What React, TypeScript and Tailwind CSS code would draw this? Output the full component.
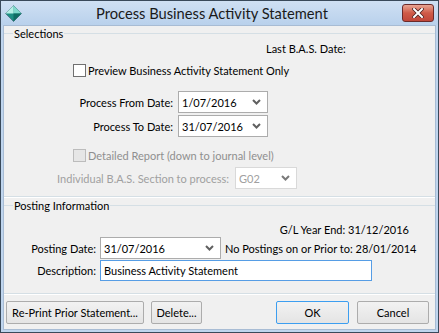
import React from 'react';

// ============================================
// Small pieces
// ============================================

const font = "font-['Lato','Segoe_UI',sans-serif]";

function Chevron({ disabled = false }: { disabled?: boolean }) {
  return (
    <svg width="9" height="6" viewBox="0 0 9 6" className="shrink-0">
      <path
        d="M1 1 L4.5 4.5 L8 1"
        fill="none"
        stroke={disabled ? '#7a7a7a' : '#606060'}
        strokeWidth="2"
      />
    </svg>
  );
}

function DateSelect({
  value,
  width,
  disabled = false,
}: {
  value: string;
  width: string;
  disabled?: boolean;
}) {
  return (
    <div
      className={`${width} h-[22px] flex items-center justify-between pl-[3px] pr-[6px] bg-white border ${
        disabled ? 'border-[#d9d9d9]' : 'border-[#acacac]'
      }`}
    >
      <span>{value}</span>
      <Chevron disabled={disabled} />
    </div>
  );
}

function CheckBox({ disabled = false }: { disabled?: boolean }) {
  return (
    <div
      className={`w-[13px] h-[13px] shrink-0 border ${
        disabled ? 'border-[#bcbcbc] bg-[#e6e6e6]' : 'border-[#707070] bg-white'
      }`}
    />
  );
}

function GroupHeader({ label }: { label: string }) {
  return (
    <div className="flex items-center h-[13px]">
      <div className="w-[9px] border-t border-[#d5dfe5]" />
      <span className="px-[1px]">{label}</span>
      <div className="flex-1 border-t border-[#d5dfe5]" />
    </div>
  );
}

function Button({
  children,
  width,
  primary = false,
}: {
  children: React.ReactNode;
  width: string;
  primary?: boolean;
}) {
  return (
    <button
      type="button"
      className={`${width} h-[23px] flex items-center justify-center whitespace-nowrap border rounded-[2px] bg-gradient-to-b from-[#f2f2f2] to-[#e4e4e4] ${
        primary ? 'border-[#3c9ef0]' : 'border-[#acacac]'
      }`}
    >
      {children}
    </button>
  );
}

// ============================================
// Dialog
// ============================================

export default function App() {
  return (
    <div
      className={`${font} w-[439px] h-[333px] bg-[#bfd5ee] border border-[#39495a] flex flex-col text-[11px] leading-[15px] text-black overflow-hidden`}
    >
      {/* Title bar */}
      <div className="h-[24px] flex items-center shrink-0 bg-gradient-to-b from-[#cfe0f3] to-[#b9d1ec]">
        <svg width="17" height="17" viewBox="0 0 17 17" className="ml-[4px]">
          <polygon points="8.5,0.5 16.5,8.5 8.5,16.5 0.5,8.5" fill="#1d8f83" stroke="#4b6f80" strokeWidth="0.8" />
          <polygon points="8.5,0.5 16.5,8.5 8.5,8.5" fill="#7fd9cc" />
          <polygon points="8.5,0.5 0.5,8.5 8.5,8.5" fill="#b6efe6" />
          <polygon points="8.5,16.5 16.5,8.5 8.5,8.5" fill="#0f6c63" />
        </svg>
        <div className="flex-1 text-center text-[14.7px] leading-[20px] text-[#1a1a1a]">
          Process Business Activity Statement
        </div>
        <div className="mr-[4px] w-[32px] h-[18px] rounded-[3px] border border-[#6b2a2a] bg-gradient-to-b from-[#e8a493] via-[#cf5a48] to-[#c0463a] flex items-center justify-center">
          <svg width="12" height="10" viewBox="0 0 12 10">
            <path d="M2 1 L10 9 M10 1 L2 9" stroke="#4a2020" strokeWidth="3.6" strokeLinecap="square" />
            <path d="M2 1 L10 9 M10 1 L2 9" stroke="#ffffff" strokeWidth="2" strokeLinecap="square" />
          </svg>
        </div>
      </div>

      {/* Client area */}
      <div className="flex-1 mx-[2px] mb-[2px] bg-[#f0f0f0] flex flex-col border border-[#a8bcd4]">
        <div className="mt-[1px]">
          <GroupHeader label="Selections" />
        </div>

        <div className="mt-[1px] h-[15px] flex items-center pl-[262px]">Last B.A.S. Date:</div>

        <div className="mt-[7px] h-[14px] flex items-center pl-[69px] gap-[2px]">
          <CheckBox />
          <span>Preview Business Activity Statement Only</span>
        </div>

        <div className="mt-[14px] flex items-center">
          <div className="w-[169px] text-right">Process From Date:</div>
          <div className="ml-[5px]">
            <DateSelect value="1/07/2016" width="w-[90px]" />
          </div>
        </div>

        <div className="mt-[2px] flex items-center">
          <div className="w-[169px] text-right">Process To Date:</div>
          <div className="ml-[5px]">
            <DateSelect value="31/07/2016" width="w-[90px]" />
          </div>
        </div>

        <div className="mt-[11px] h-[14px] flex items-center pl-[69px] gap-[2px] text-[#8f8f8f]">
          <CheckBox disabled />
          <span>Detailed Report (down to journal level)</span>
        </div>

        <div className="mt-[5px] flex items-center text-[#a0a0a0]">
          <div className="w-[225px] text-right">Individual B.A.S. Section to process:</div>
          <div className="ml-[6px]">
            <DateSelect value="G02" width="w-[62px]" disabled />
          </div>
        </div>

        <div className="mt-[7px] border-t border-[#d5dfe5] border-b border-b-white" />

        <div className="mt-[1px]">
          <GroupHeader label="Posting Information" />
        </div>

        <div className="mt-[10px] h-[15px] flex items-center justify-end pr-[26px]">
          G/L Year End: 31/12/2016
        </div>

        <div className="flex items-center">
          <div className="w-[92px] text-right">Posting Date:</div>
          <div className="ml-[4px]">
            <DateSelect value="31/07/2016" width="w-[121px]" />
          </div>
          <div className="ml-[4px] whitespace-nowrap">No Postings on or Prior to: 28/01/2014</div>
        </div>

        <div className="mt-[1px] flex items-center">
          <div className="w-[92px] text-right">Description:</div>
          <div className="ml-[4px] w-[272px] h-[21px] flex items-center pl-[3px] bg-white border border-[#569de5]">
            Business Activity Statement
          </div>
        </div>

        <div className="mt-[12px] border-t border-[#d5dfe5] border-b border-b-white" />

        <div className="mt-[6px] flex items-center px-[2px]">
          <Button width="w-[138px]">Re-Print Prior Statement...</Button>
          <div className="ml-[7px]">
            <Button width="w-[51px]">Delete...</Button>
          </div>
          <div className="ml-auto flex gap-[8px] mr-[4px]">
            <Button width="w-[73px]" primary>
              OK
            </Button>
            <Button width="w-[72px]">Cancel</Button>
          </div>
        </div>
      </div>
    </div>
  );
}
